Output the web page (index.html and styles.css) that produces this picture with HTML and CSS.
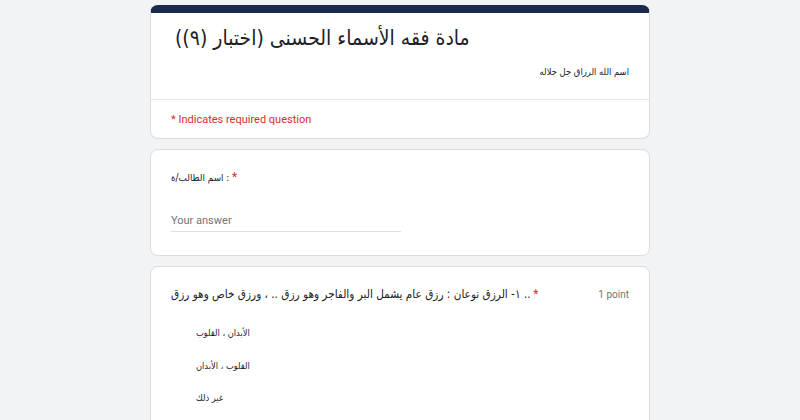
FILE: index.html
```html
<!DOCTYPE html>
<html lang="ar">
<head>
<meta charset="utf-8">
<title>مادة فقه الأسماء الحسنى</title>
<link rel="stylesheet" href="styles.css">
</head>
<body>
<main class="form">
  <section class="card header-card">
    <div class="header-top">
      <h1 class="form-title" dir="rtl">مادة فقه الأسماء الحسنى (اختبار (٩))</h1>
      <p class="form-desc" dir="rtl">اسم الله الرزاق جل جلاله</p>
    </div>
    <div class="header-bottom">
      <span class="required-note">* Indicates required question</span>
    </div>
  </section>

  <section class="card question-card">
    <div class="q-title name-label"><span class="q-text">اسم الطالب/ة :</span><span class="req"> *</span></div>
    <div class="answer">Your answer</div>
  </section>

  <section class="card question-card">
    <div class="q-head">
      <div class="q-title"><span class="q-text">١- الرزق نوعان : رزق عام يشمل البر والفاجر وهو رزق .. ، ورزق خاص وهو رزق ..</span><span class="req"> *</span></div>
      <span class="points">1 point</span>
    </div>
    <ul class="options">
      <li class="option" dir="rtl">الأبدان ، القلوب</li>
      <li class="option" dir="rtl">القلوب ، الأبدان</li>
      <li class="option" dir="rtl">غير ذلك</li>
    </ul>
  </section>
</main>
</body>
</html>
```
FILE: styles.css
```css
html, body {
  margin: 0;
  padding: 0;
}
body {
  background: #f1f3f4;
  font-family: Roboto, "Liberation Sans", "DejaVu Sans", sans-serif;
  color: #202124;
}
.form {
  width: 500px;
  margin: 5px auto 0;
  display: flex;
  flex-direction: column;
  gap: 10px;
}
.card {
  background: #fff;
  border: 1px solid #dadce0;
  border-radius: 8px;
  box-sizing: border-box;
}
.header-card {
  border-top: 8px solid #1b2a4c;
}
.header-top {
  padding: 7px 20px 19px 24px;
  border-bottom: 1px solid #e6e6e6;
}
.form-title,
.form-desc,
.q-title,
.option {
  font-family: "DejaVu Sans Condensed", "DejaVu Sans", sans-serif;
  font-stretch: condensed;
}
.form-title {
  margin: 0;
  font-weight: 400;
  font-size: 21px;
  line-height: 36px;
  text-align: left;
  color: #202124;
}
.form-desc {
  margin: 8px 0 0;
  font-size: 9.4px;
  line-height: 16px;
  text-align: right;
  color: #202124;
}
.header-bottom {
  padding: 10px 20px 10px;
  line-height: 16px;
}
.required-note {
  color: #d93025;
  font-size: 11px;
}
.question-card {
  padding: 19px 20px 23px;
}
.q-head {
  display: flex;
  justify-content: space-between;
  align-items: center;
}
.q-title {
  font-size: 11.7px;
  line-height: 16px;
  color: #202124;
}
.name-label {
  font-size: 9.8px;
}
.req {
  color: #d93025;
  font-family: Roboto, sans-serif;
  font-size: 12px;
}
.points {
  font-family: Roboto, sans-serif;
  font-size: 10px;
  color: #70757a;
}
.answer {
  width: 230px;
  margin-top: 27px;
  padding-bottom: 2px;
  border-bottom: 1px solid #e0e0e0;
  font-size: 11px;
  line-height: 16px;
  color: #70757a;
}
.options {
  list-style: none;
  margin: 23px 0 0;
  padding: 0 0 0 25px;
  display: flex;
  flex-direction: column;
  gap: 16.5px;
}
.option {
  font-size: 9.2px;
  line-height: 16px;
  text-align: left;
  color: #202124;
}
```
